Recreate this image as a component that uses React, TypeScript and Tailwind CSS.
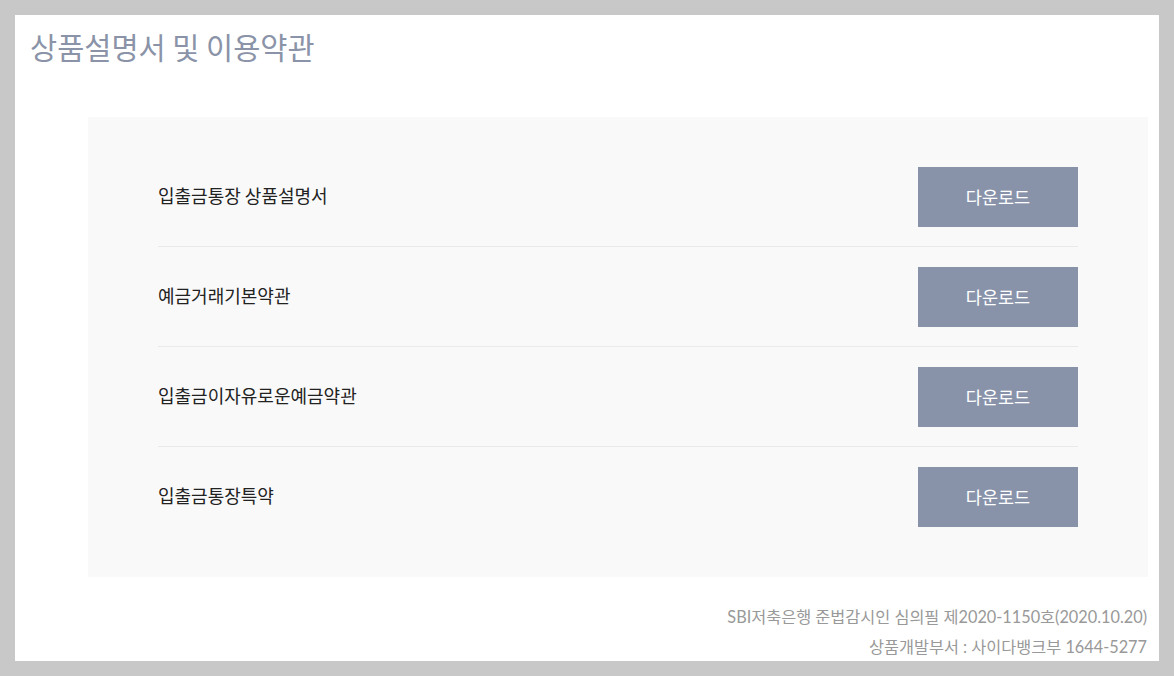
import React from 'react';

const docs = ['입출금통장 상품설명서', '예금거래기본약관', '입출금이자유로운예금약관', '입출금통장특약'];

const kr = { fontFamily: '"Noto Sans CJK KR", "Noto Sans", sans-serif' };
const latinKr = { fontFamily: 'Lato, "Noto Sans CJK KR", sans-serif' };

export default function App() {
  return (
    <div className="w-[1174px] h-[676px] bg-[#c8c8c8] p-[15px]" style={kr}>
      <div className="h-full bg-white flex flex-col">
        {/* Title */}
        <h1 className="pl-[15px] pt-[11px] h-[53px] shrink-0 text-[29.5px] leading-[40px] text-[#8a93a8] font-normal">
          상품설명서 및 이용약관
        </h1>

        {/* Document list */}
        <div className="mt-[49px] ml-[73px] mr-[11px] shrink-0 bg-[#f9f9f9] px-[70px] pt-[30px] pb-[31px]">
          {docs.map((name, i) => (
            <div
              key={name}
              className={`flex items-center justify-between pt-[20px] pb-[19px] ${i < docs.length - 1 ? 'border-b border-[#e9e9e9]' : ''}`}
            >
              <span className="text-[18px] text-[#222] mb-[3px]">{name}</span>
              <button className="w-[160px] h-[60px] bg-[#8893aa] text-white text-[17.5px] flex items-center justify-center">
                다운로드
              </button>
            </div>
          ))}
        </div>

        {/* Footer */}
        <div className="mt-[25px] pr-[12px] text-right text-[16.3px] leading-[30px] text-[#999]" style={latinKr}>
          <p>SBI저축은행 준법감시인 심의필 제2020-1150호(2020.10.20)</p>
          <p>상품개발부서 : 사이다뱅크부 1644-5277</p>
        </div>
      </div>
    </div>
  );
}
